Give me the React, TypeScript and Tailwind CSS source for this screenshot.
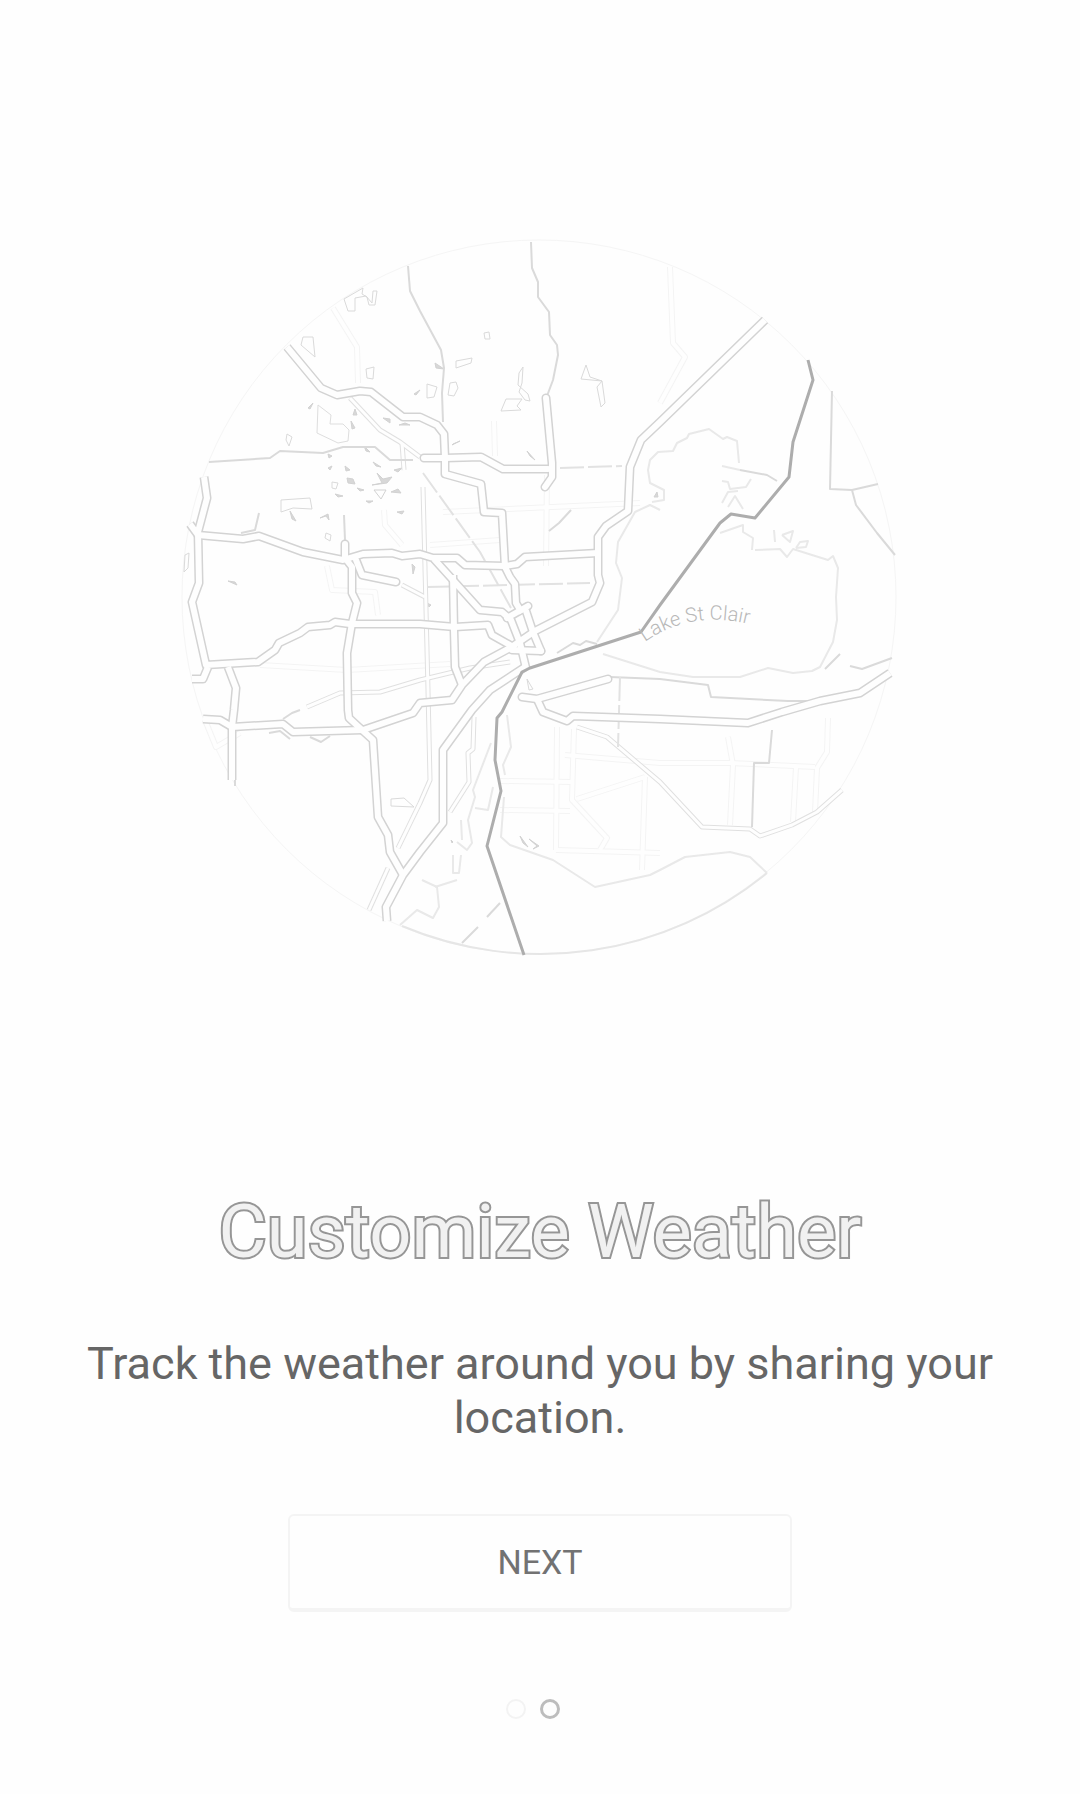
const highways = [
  '287,347 321,388 337,395 360,391 371,392 403,417 420,417 437,425 444,434 445,458 445,474 481,484 484,512 502,513 505,567 510,577 515,584 516,603 522,613',
  '765,320 660,422 641,440 630,467 628,511 606,526 598,537 598,575 600,583 592,602 535,631 510,648 484,662 462,685 452,700 420,703 413,713 363,730 293,732 283,724 232,727 220,720 203,719',
  '198,535 243,539 259,536 303,552 343,560 363,554 392,553 402,556 420,554 433,558 457,558 465,565 505,566 517,564 525,557 598,553',
  '204,477 207,498 198,532 199,583 192,602 206,665 258,662 275,650 279,643 300,633 308,627 330,625 335,622 350,624 420,624 455,627 488,625 492,635 515,648',
  '190,524 198,535',
  '192,679 203,679 208,667',
  '228,667 236,688 234,710 232,727 232,780',
  '345,558 352,567 352,593 357,603 352,623 347,653 348,710 349,718 362,730 373,740 378,817 388,835 390,852 403,875',
  '387,921 386,907 403,875 420,852 443,823 443,750 472,710 490,690 525,667',
  '453,575 454,630 455,667 462,685',
  '434,559 480,610 502,612 511,620 520,643 526,668',
  '537,699 543,712 567,721 573,716 660,719 748,723 782,712 820,701 860,693 890,673',
];
const streets = [
  '424,458 445,458 481,457 503,469 548,469',
  '546,398 552,463 552,477 545,487',
  '345,544 345,558',
  '356,560 362,575 396,582',
  '522,697 537,699 608,679',
  '507,618 528,606',
  '526,611 533,632 541,651',
  '512,650 541,651',
];
const rails = [
  '423,487 428,690 430,780 420,803 398,848',
  '388,868 369,910',
  '474,717 473,749 468,753 469,782 450,812',
  '307,707 340,693 380,692 420,680 470,668 510,662',
  '350,398 380,430 400,442 420,457',
  '402,443 404,470',
  '577,727 607,737 660,782 702,827 750,829 760,836 792,825 817,812 842,790',
  '402,585 425,597',
];
const dimRoads = [
  '670,267 673,343 685,357 660,403',
  '333,308 357,347 358,383',
  '557,727 556,850',
  '574,729 572,800 607,838 600,850',
  '500,781 573,782',
  '500,810 570,811',
  '556,850 660,853',
  '565,755 660,763 730,763 815,767',
  '577,799 645,777',
  '645,777 642,870',
  '728,737 733,765 730,825',
  '796,767 793,822',
  '828,718 827,752 817,768 815,812',
  '494,421 495,456',
  '443,512 640,503',
  '547,475 546,566',
  '430,545 500,540',
  '327,566 332,590 375,592 378,615',
  '260,665 347,670 450,664',
  '384,510 385,525 402,545',
  '205,720 216,747 240,733',
];
const lines = [
  '408,266 410,291 420,311 441,350 444,368 442,393 443,422',
  '531,242 532,268 538,282 538,297 549,312 550,335 557,345 558,355 553,380 547,396',
  '209,462 270,458 280,451 323,453 343,447 375,447 390,460 413,460',
  '832,391 830,489 852,490 878,484',
  '852,490 856,505 877,533 895,555',
  '740,470 767,475 777,481',
  '610,677 660,679 708,685 711,697 788,701 815,701',
  '850,666 862,669 892,658',
  '825,669 840,654',
  '772,730 769,763 754,763 752,827',
  '462,943 478,927',
  '487,917 500,903',
  '344,515 345,540',
  '241,533 255,530 259,513',
  '549,531 559,523 571,510',
  '557,653 573,643 580,645 586,641 597,644',
  '269,733 280,731 290,739',
  '310,737 321,742 330,736',
  '283,719 292,713 300,710',
  '235,780 235,786',
];
const shores = [
  '660,510 650,505 635,512 618,542 616,563 622,578 618,610 597,642',
  '652,502 664,500 664,490 650,483 648,470 650,460 658,452 673,451 677,443 687,438 689,434 709,429 723,439 727,437 737,441 739,463',
  '722,466 740,470',
  '722,481 728,482 730,489 746,487 751,479',
  '722,503 728,492 738,491',
  '728,507 735,496 743,509',
  '720,533 743,525 743,532 753,538 752,550',
  '755,550 780,549 787,557 793,549 812,555 828,560 833,556 838,568 836,597 837,620 833,642 820,667 812,671 793,673 768,668 740,677 693,677 660,672 603,654',
  '774,530 775,542',
  '782,535 793,531 790,542 782,535',
  '796,548 800,542 808,541 806,547 796,548',
  '504,797 501,837 510,845 553,860 595,887 650,875 660,870 685,857 730,852 750,857 767,873',
  '400,925 417,910 433,918 439,907 437,887 422,880',
  '435,887 457,880',
  '491,743 473,790 475,797 468,820 472,843 467,850 457,842',
  '493,787 488,810 475,808',
  '507,715 511,747 503,765 505,775',
  '461,820 462,840',
  '453,855 453,873 459,873 461,855',
];
const outlines = [
  '344,299 363,288 362,294 367,297 369,305 375,305 377,291 373,291 372,303 366,296 355,298 355,311 348,311',
  '303,337 313,337 315,357 301,345',
  '366,369 374,367 373,379 367,378',
  '287,434 292,437 289,446 286,440',
  '484,333 489,332 490,339 485,339',
  '456,361 472,358 471,363 456,368',
  '427,384 437,387 434,397 427,398',
  '450,383 456,382 458,388 454,396 448,395',
  '523,367 519,373 518,385 528,394 530,401 525,400 519,392 522,383',
  '501,411 506,399 522,399 517,406 521,410',
  '586,365 590,377 602,381 605,403 601,407 597,387 602,381 581,379',
  '281,500 310,498 312,509 293,508 281,512',
  '332,482 338,483 336,489 332,488',
  '326,533 331,535 330,541 325,538',
  '391,799 404,798 414,807 391,806',
  '185,555 189,553 188,568 184,572',
  '527,679 531,686 533,689 529,690',
];
const patches = [
  '308,408 313,403 310,409', '355,409 357,415 353,415', '351,421 355,428 352,429',
  '383,418 390,419 390,423', '399,425 405,423 410,425', '414,394 420,390 416,395',
  '435,363 444,369 436,368', '328,454 332,456 329,458', '328,468 332,466 330,470',
  '373,462 381,467 376,466', '452,445 460,441 453,444', '527,451 535,460 530,456',
  '347,478 353,479 355,484 348,483', '335,494 343,496 338,497', '357,488 364,490 360,491',
  '377,473 383,479 392,477 387,483 372,485 382,483', '391,492 398,489 401,493',
  '366,501 373,501 369,503', '397,512 404,511 402,514',
  '290,511 296,521 292,519', '320,518 328,514 329,520 326,516', '412,564 415,567 413,574',
  '228,581 235,582 237,585', '427,603 431,605 429,607', '520,836 528,847 523,843',
  '529,839 539,846 533,849 537,846', '451,840 453,842 452,843', '654,497 657,492 658,497',
  '394,470 402,468 398,472', '364,446 370,452 366,451', '345,466 350,470 346,471',
];

function Lines({ items }: { items: string[] }) {
  return (
    <>
      {items.map((points) => (
        <polyline key={points} points={points} />
      ))}
    </>
  );
}

function Shapes({ items }: { items: string[] }) {
  return (
    <>
      {items.map((points) => (
        <polygon key={points} points={points} />
      ))}
    </>
  );
}

function MapPreview() {
  return (
    <svg
      viewBox="180 230 720 740"
      className="h-auto w-2/3"
      role="img"
      aria-label="Map of the area around Lake St Clair"
      fill="none"
      strokeLinejoin="round"
    >
      <circle cx="539" cy="597" r="357" stroke="#f5f5f5" strokeWidth="1" />
      <path d="M402,926 A357,357 0 0 0 767,873" stroke="#e6e6e6" strokeWidth="2" />
      <g stroke="#f4f4f4" strokeWidth="6"><Lines items={dimRoads} /></g>
      <g stroke="#fefefe" strokeWidth="4"><Lines items={dimRoads} /></g>
      <g stroke="#e9e9e9" strokeWidth="2"><Lines items={shores} /></g>
      <polyline points="348,441 338,443 317,433 318,405 331,415 330,424 343,424 349,430 348,441" stroke="#dedede" />
      <g stroke="#dadada" strokeWidth="1"><Shapes items={outlines} /></g>
      <polygon points="374,490 386,490 381,499" stroke="#d2d2d2" />
      <g stroke="#d2d2d2" strokeWidth="1" fill="#d8d8d8"><Shapes items={patches} /></g>
      <g stroke="#e0e0e0" strokeWidth="5"><Lines items={rails} /></g>
      <g stroke="#fefefe" strokeWidth="3"><Lines items={rails} /></g>
      <g stroke="#dadada" strokeWidth="2"><Lines items={lines} /></g>
      <g stroke="#e2e2e2" strokeWidth="2" strokeDasharray="24 4">
        <polyline points="560,468 622,466" />
        <polyline points="427,587 590,583" />
        <polyline points="423,473 480,552 511,608" />
        <polyline points="620,677 618,747" />
      </g>
      <g stroke="#d3d3d3" strokeWidth="9">
        <Lines items={highways} />
        <g strokeLinecap="round"><Lines items={streets} /></g>
      </g>
      <g stroke="#fefefe" strokeWidth="6">
        <Lines items={highways} />
        <g strokeLinecap="round"><Lines items={streets} /></g>
      </g>
      <polyline
        points="808,360 813,380 793,442 789,477 755,518 731,514 720,523 660,605 641,632 530,668 522,672 502,712 497,718 495,760 501,791 487,846 524,955"
        stroke="#adadad"
        strokeWidth="3"
      />
      <path id="lake-label" d="M645,642 C669,625 704,612 752,625" />
      <text className="font-[Roboto,sans-serif] text-[20px] font-light" fill="#b8b8b8">
        <textPath href="#lake-label">Lake St Clair</textPath>
      </text>
    </svg>
  );
}

export default function App() {
  return (
    <main className="flex min-h-screen flex-col items-center bg-[#fefefe] pt-[230px] pb-20 font-[Roboto,sans-serif]">
      <MapPreview />
      <h1 className="mt-[220px] text-center text-[74px] leading-[84px] font-normal text-[#f1f1f1] [paint-order:stroke_fill] [-webkit-text-stroke:4px_#969696]">
        Customize Weather
      </h1>
      <p className="mt-[63px] px-16 text-center text-[45px] leading-[54px] text-[#666666]">
        Track the weather around you by sharing your location.
      </p>
      <button
        type="button"
        className="mt-[69px] h-[98px] w-[504px] max-w-full rounded-md border-2 border-b-4 border-[#f4f4f4] bg-[#fefefe] text-[34px] text-[#727272]"
      >
        NEXT
      </button>
      <nav aria-label="Onboarding pages" className="mt-[87px] flex">
        <button type="button" aria-label="Page 1" className="mr-[14px] size-5 rounded-full border-2 border-[#f3f3f3]" />
        <button type="button" aria-label="Page 2" aria-current="page" className="mr-[14px] size-5 rounded-full border-3 border-[#bdbdbd]" />
      </nav>
    </main>
  );
}
